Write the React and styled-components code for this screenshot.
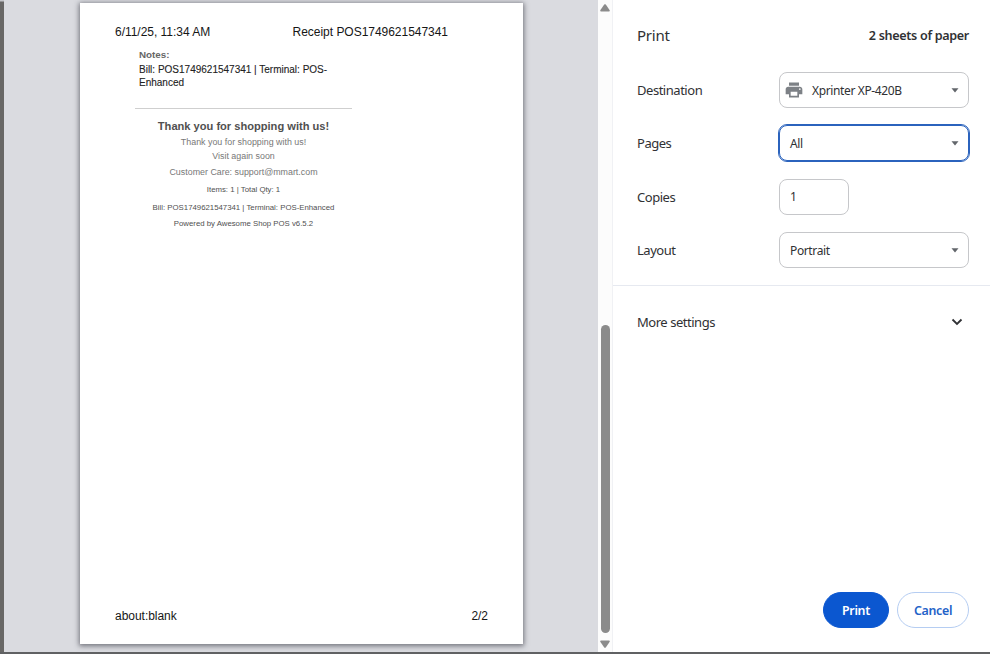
import React from "react";
import styled, { createGlobalStyle } from "styled-components";

const GlobalStyle = createGlobalStyle`
  * { box-sizing: border-box; }
  body { margin: 0; background: #fff; overflow: hidden; }
`;

const Dialog = styled.div`
  display: grid;
  grid-template-columns: 598px 14px 1px 377px;
  width: 990px;
  height: 654px;
  background: #fff;
  border-bottom: 2px solid #606163;
  overflow: hidden;
  font-family: "Noto Sans", "Open Sans", sans-serif;
  color: #303134;
`;

const Preview = styled.div`
  height: 652px;
  background: #dadbe0;
  border-left: 4px solid #686766;
  border-image: linear-gradient(#c4c5ca 0 2px, #686766 3px) 1;
  padding: 3px 0 0 76px;
  overflow: hidden;
`;

const Paper = styled.article`
  display: flex;
  flex-direction: column;
  width: 443px;
  height: 641px;
  padding: 21px 35px 20px;
  background: #fff;
  box-shadow: 0 1px 5px 1px rgba(50, 52, 62, 0.62);
  font-family: "Liberation Sans", Arial, sans-serif;
  color: #161616;
`;

const PageLine = styled.div`
  display: flex;
  justify-content: space-between;
  height: 16px;
  line-height: 16px;
  font-size: 12px;
  letter-spacing: -0.03px;
  white-space: nowrap;
  padding-right: ${(p) => p.$inset || 0}px;
`;

const Receipt = styled.section`
  width: 217px;
  margin-left: 20px;
  padding-top: 7px;
  flex: 1;
`;

const Notes = styled.div`
  padding-left: 4px;
  height: 62px;
  border-bottom: 1px solid #cfcfcf;
`;

const NoteTitle = styled.div`
  font-size: 9.8px;
  line-height: 16px;
  font-weight: 700;
  color: #666;
`;

const NoteText = styled.div`
  font-size: 10px;
  line-height: 13px;
  color: #222;
  -webkit-text-stroke: 0.1px #222;
`;

const Closing = styled.div`
  display: flex;
  flex-direction: column;
  align-items: center;
  padding-top: 8px;
  white-space: nowrap;
`;

const ClosingLine = styled.div`
  height: ${(p) => p.$h}px;
  line-height: ${(p) => p.$h}px;
  font-size: ${(p) => p.$size}px;
  font-weight: ${(p) => (p.$bold ? 700 : 400)};
  color: ${(p) => p.$color || "#777"};
`;

const Scrollbar = styled.div`
  display: flex;
  flex-direction: column;
  align-items: center;
  justify-content: space-between;
  height: 652px;
  padding: 4px 0;
  background: #fcfcfc;
`;

const ScrollArrow = styled.svg`
  display: block;
  width: 10px;
  height: 8px;
  fill: #8b8b8b;
  transform: rotate(${(p) => (p.$down ? 180 : 0)}deg);
`;

const Thumb = styled.div`
  width: 9px;
  height: 308px;
  margin: auto 0 7px;
  border-radius: 5px;
  background: #8b8b8b;
`;

const Divider = styled.div`
  background: #f0f1f4;
`;

const Sidebar = styled.aside`
  display: flex;
  flex-direction: column;
  height: 652px;
`;

const Header = styled.header`
  display: flex;
  align-items: center;
  justify-content: space-between;
  height: 72px;
  padding: 0 21px 2px 24px;
`;

const Title = styled.h1`
  margin: 0;
  font-size: 15px;
  font-weight: 400;
  letter-spacing: -0.25px;
`;

const SheetCount = styled.span`
  font-size: 12.6px;
  font-weight: 600;
  letter-spacing: -0.33px;
`;

const Settings = styled.div`
  display: flex;
  flex-direction: column;
  gap: 17.4px;
  height: 214px;
  border-bottom: 1px solid #e6e9f0;
`;

const Row = styled.div`
  display: flex;
  align-items: center;
  height: 36px;
  flex: none;
  padding-left: 24px;
`;

const Label = styled.label`
  width: 142px;
  font-size: 13px;
  letter-spacing: -0.47px;
  white-space: nowrap;
`;

const Field = styled.div`
  display: flex;
  align-items: center;
  width: ${(p) => p.$w || 190}px;
  height: 36px;
  padding: 0 9px 0 ${(p) => (p.$icon ? 4 : 10)}px;
  border: 1px solid ${(p) => (p.$focus ? "#2b63bd" : "#c6c7ca")};
  outline: ${(p) => (p.$focus ? "1px solid #2b63bd" : "none")};
  border-radius: 8px;
  font-size: 12px;
  letter-spacing: -0.37px;
  white-space: nowrap;
`;

const PrinterIcon = styled.svg`
  width: 20px;
  height: 20px;
  margin-right: 8px;
  fill: #7d8186;
`;

const Caret = styled.svg`
  width: 8px;
  height: 5px;
  margin-left: auto;
  fill: #62666b;
`;

const MoreSettings = styled.div`
  display: flex;
  align-items: center;
  justify-content: space-between;
  height: 72px;
  padding: 0 27px 1px 24px;
`;

const Chevron = styled.svg`
  width: 12px;
  height: 8px;
  fill: none;
  stroke: #303134;
  stroke-width: 1.8;
`;

const Actions = styled.footer`
  display: flex;
  justify-content: flex-end;
  gap: 8px;
  margin-top: auto;
  padding: 0 21px 24px 0;
`;

const Button = styled.button`
  width: ${(p) => p.$w}px;
  height: 36px;
  padding: 0;
  border-radius: 18px;
  border: 1px solid ${(p) => (p.$primary ? "#0b57d0" : "#b5cdf2")};
  background: ${(p) => (p.$primary ? "#0b57d0" : "#fff")};
  color: ${(p) => (p.$primary ? "#fff" : "#2362c8")};
  font: 600 12.4px "Noto Sans", "Open Sans", sans-serif;
  letter-spacing: -0.3px;
`;

const DropCaret = () => (
  <Caret viewBox="0 0 8 5"><path d="M.5 .3h7L4 4.4z" /></Caret>
);

const Arrow = ({ down }) => (
  <ScrollArrow $down={down} viewBox="0 0 10 8"><path d="M4.2.6Q5-.2 5.8.6L9.7 6.3Q10 7.5 9 7.5H1Q0 7.5.3 6.3z" /></ScrollArrow>
);

export default function App() {
  return (
    <>
      <GlobalStyle />
      <Dialog>
        <Preview>
          <Paper>
            <PageLine $inset={40}>
              <span>6/11/25, 11:34 AM</span>
              <span>Receipt POS1749621547341</span>
            </PageLine>
            <Receipt>
              <Notes>
                <NoteTitle>Notes:</NoteTitle>
                <NoteText>Bill: POS1749621547341 | Terminal: POS-<br />Enhanced</NoteText>
              </Notes>
              <Closing>
                <ClosingLine $h={18} $size={11.1} $bold $color="#505050">Thank you for shopping with us!</ClosingLine>
                <ClosingLine $h={14} $size={8.9}>Thank you for shopping with us!</ClosingLine>
                <ClosingLine $h={15} $size={8.9}>Visit again soon</ClosingLine>
                <ClosingLine $h={16} $size={8.9}>Customer Care: support@mmart.com</ClosingLine>
                <ClosingLine $h={20} $size={7.8} $color="#505050">Items: 1 | Total Qty: 1</ClosingLine>
                <ClosingLine $h={15} $size={7.8} $color="#505050">Bill: POS1749621547341 | Terminal: POS-Enhanced</ClosingLine>
                <ClosingLine $h={18} $size={7.8} $color="#505050">Powered by Awesome Shop POS v6.5.2</ClosingLine>
              </Closing>
            </Receipt>
            <PageLine>
              <span>about:blank</span>
              <span>2/2</span>
            </PageLine>
          </Paper>
        </Preview>
        <Scrollbar>
          <Arrow />
          <Thumb />
          <Arrow down />
        </Scrollbar>
        <Divider />
        <Sidebar>
          <Header>
            <Title>Print</Title>
            <SheetCount>2 sheets of paper</SheetCount>
          </Header>
          <Settings>
            <Row>
              <Label>Destination</Label>
              <Field $icon>
                <PrinterIcon viewBox="0 0 24 24">
                  <path d="M19 8H5c-1.660 0-3 1.340-3 3v6h4v4h12v-4h4v-6c0-1.660-1.340-3-3-3zm-3 11H8v-5h8v5zm3-7c-.55 0-1-.45-1-1s.45-1 1-1 1 .45 1 1-.45 1-1 1zm-1-9H6v4h12V3z" />
                </PrinterIcon>
                Xprinter XP-420B
                <DropCaret />
              </Field>
            </Row>
            <Row>
              <Label>Pages</Label>
              <Field $focus>All<DropCaret /></Field>
            </Row>
            <Row>
              <Label>Copies</Label>
              <Field $w={70}>1</Field>
            </Row>
            <Row>
              <Label>Layout</Label>
              <Field>Portrait<DropCaret /></Field>
            </Row>
          </Settings>
          <MoreSettings>
            <Label>More settings</Label>
            <Chevron viewBox="0 0 12 8"><path d="M1.5 1.5 6 6l4.5-4.5" /></Chevron>
          </MoreSettings>
          <Actions>
            <Button $primary $w={66}>Print</Button>
            <Button $w={72}>Cancel</Button>
          </Actions>
        </Sidebar>
      </Dialog>
    </>
  );
}
